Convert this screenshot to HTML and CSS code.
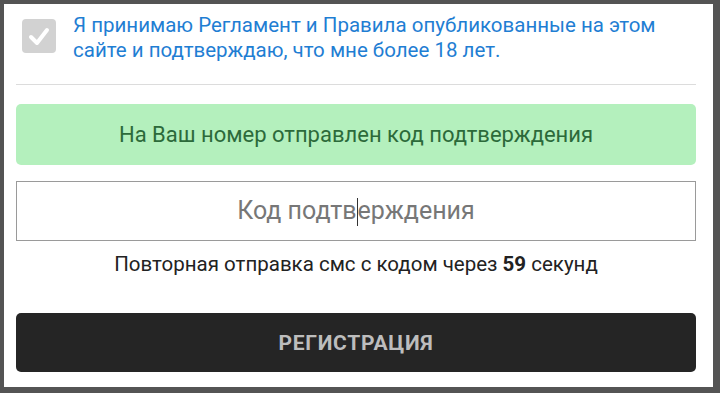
FILE: index.html
```html
<!DOCTYPE html>
<html lang="ru">
<head>
    <meta charset="UTF-8">
    <meta name="viewport" content="width=device-width, initial-scale=1.0">
    <title>Регистрация</title>
    <link rel="stylesheet" href="styles.css">
</head>
<body>
    <div class="panel">
        <label class="agree">
            <span class="checkbox">
                <svg width="22" height="22" viewBox="0 0 22 22">
                    <path d="M3 12 L9 18 L19 5" fill="none" stroke="#fff" stroke-width="4" stroke-linecap="round" stroke-linejoin="round"/>
                </svg>
            </span>
            <span class="agree-text">Я принимаю Регламент и Правила опубликованные на этом сайте и подтверждаю, что мне более 18 лет.</span>
        </label>

        <div class="divider"></div>

        <div class="alert">На Ваш номер отправлен код подтверждения</div>

        <div class="code-field">
            <span class="placeholder">Код подтв<span class="caret"></span>ерждения</span>
        </div>

        <p class="resend">Повторная отправка смс с кодом через <b>59</b> секунд</p>

        <button class="submit">РЕГИСТРАЦИЯ</button>
    </div>
</body>
</html>
```

FILE: styles.css
```css
html, body {
    margin: 0;
    height: 100%;
}
body {
    background-color: #545454;
    padding: 4px 7px 6px 4px;
    box-sizing: border-box;
    font-family: Roboto, "Noto Sans", sans-serif;
}
.panel {
    background-color: #fff;
    height: 383px;
    padding: 9px 17px 0 12px;
    box-sizing: border-box;
    display: flex;
    flex-direction: column;
}
.agree {
    display: flex;
    align-items: flex-start;
    gap: 17px;
    padding-left: 6px;
}
.checkbox {
    flex: none;
    width: 34px;
    height: 34px;
    margin-top: 6px;
    background-color: #d2d2d2;
    border-radius: 4px;
    display: flex;
    align-items: center;
    justify-content: center;
}
.agree-text {
    color: #1f7ed3;
    font-size: 20.5px;
    line-height: 25px;
}
.divider {
    height: 1px;
    background-color: #dcdcdc;
    margin-top: 21px;
}
.alert {
    margin-top: 19px;
    height: 61px;
    background-color: #b4f0bd;
    border-radius: 5px;
    color: #2c6a3a;
    font-size: 22px;
    display: flex;
    align-items: center;
    justify-content: center;
}
.code-field {
    margin-top: 16px;
    height: 60px;
    border: 1.5px solid #9a9a9a;
    box-sizing: border-box;
    display: flex;
    align-items: center;
    justify-content: center;
}
.placeholder {
    color: #777;
    font-size: 25px;
}
.caret {
    display: inline-block;
    width: 1px;
    height: 28px;
    background-color: #333;
    vertical-align: middle;
}
.resend {
    margin: 11px 0 0;
    text-align: center;
    font-size: 20.5px;
    line-height: 24px;
    color: #222;
}
.resend b {
    font-weight: 700;
}
.submit {
    margin-top: 37px;
    height: 59px;
    border: none;
    border-radius: 5px;
    background-color: #252525;
    color: #bdbdbd;
    font-family: Roboto, "Noto Sans", sans-serif;
    font-size: 21px;
    letter-spacing: 0.7px;
    font-weight: 700;
    cursor: pointer;
}
```
